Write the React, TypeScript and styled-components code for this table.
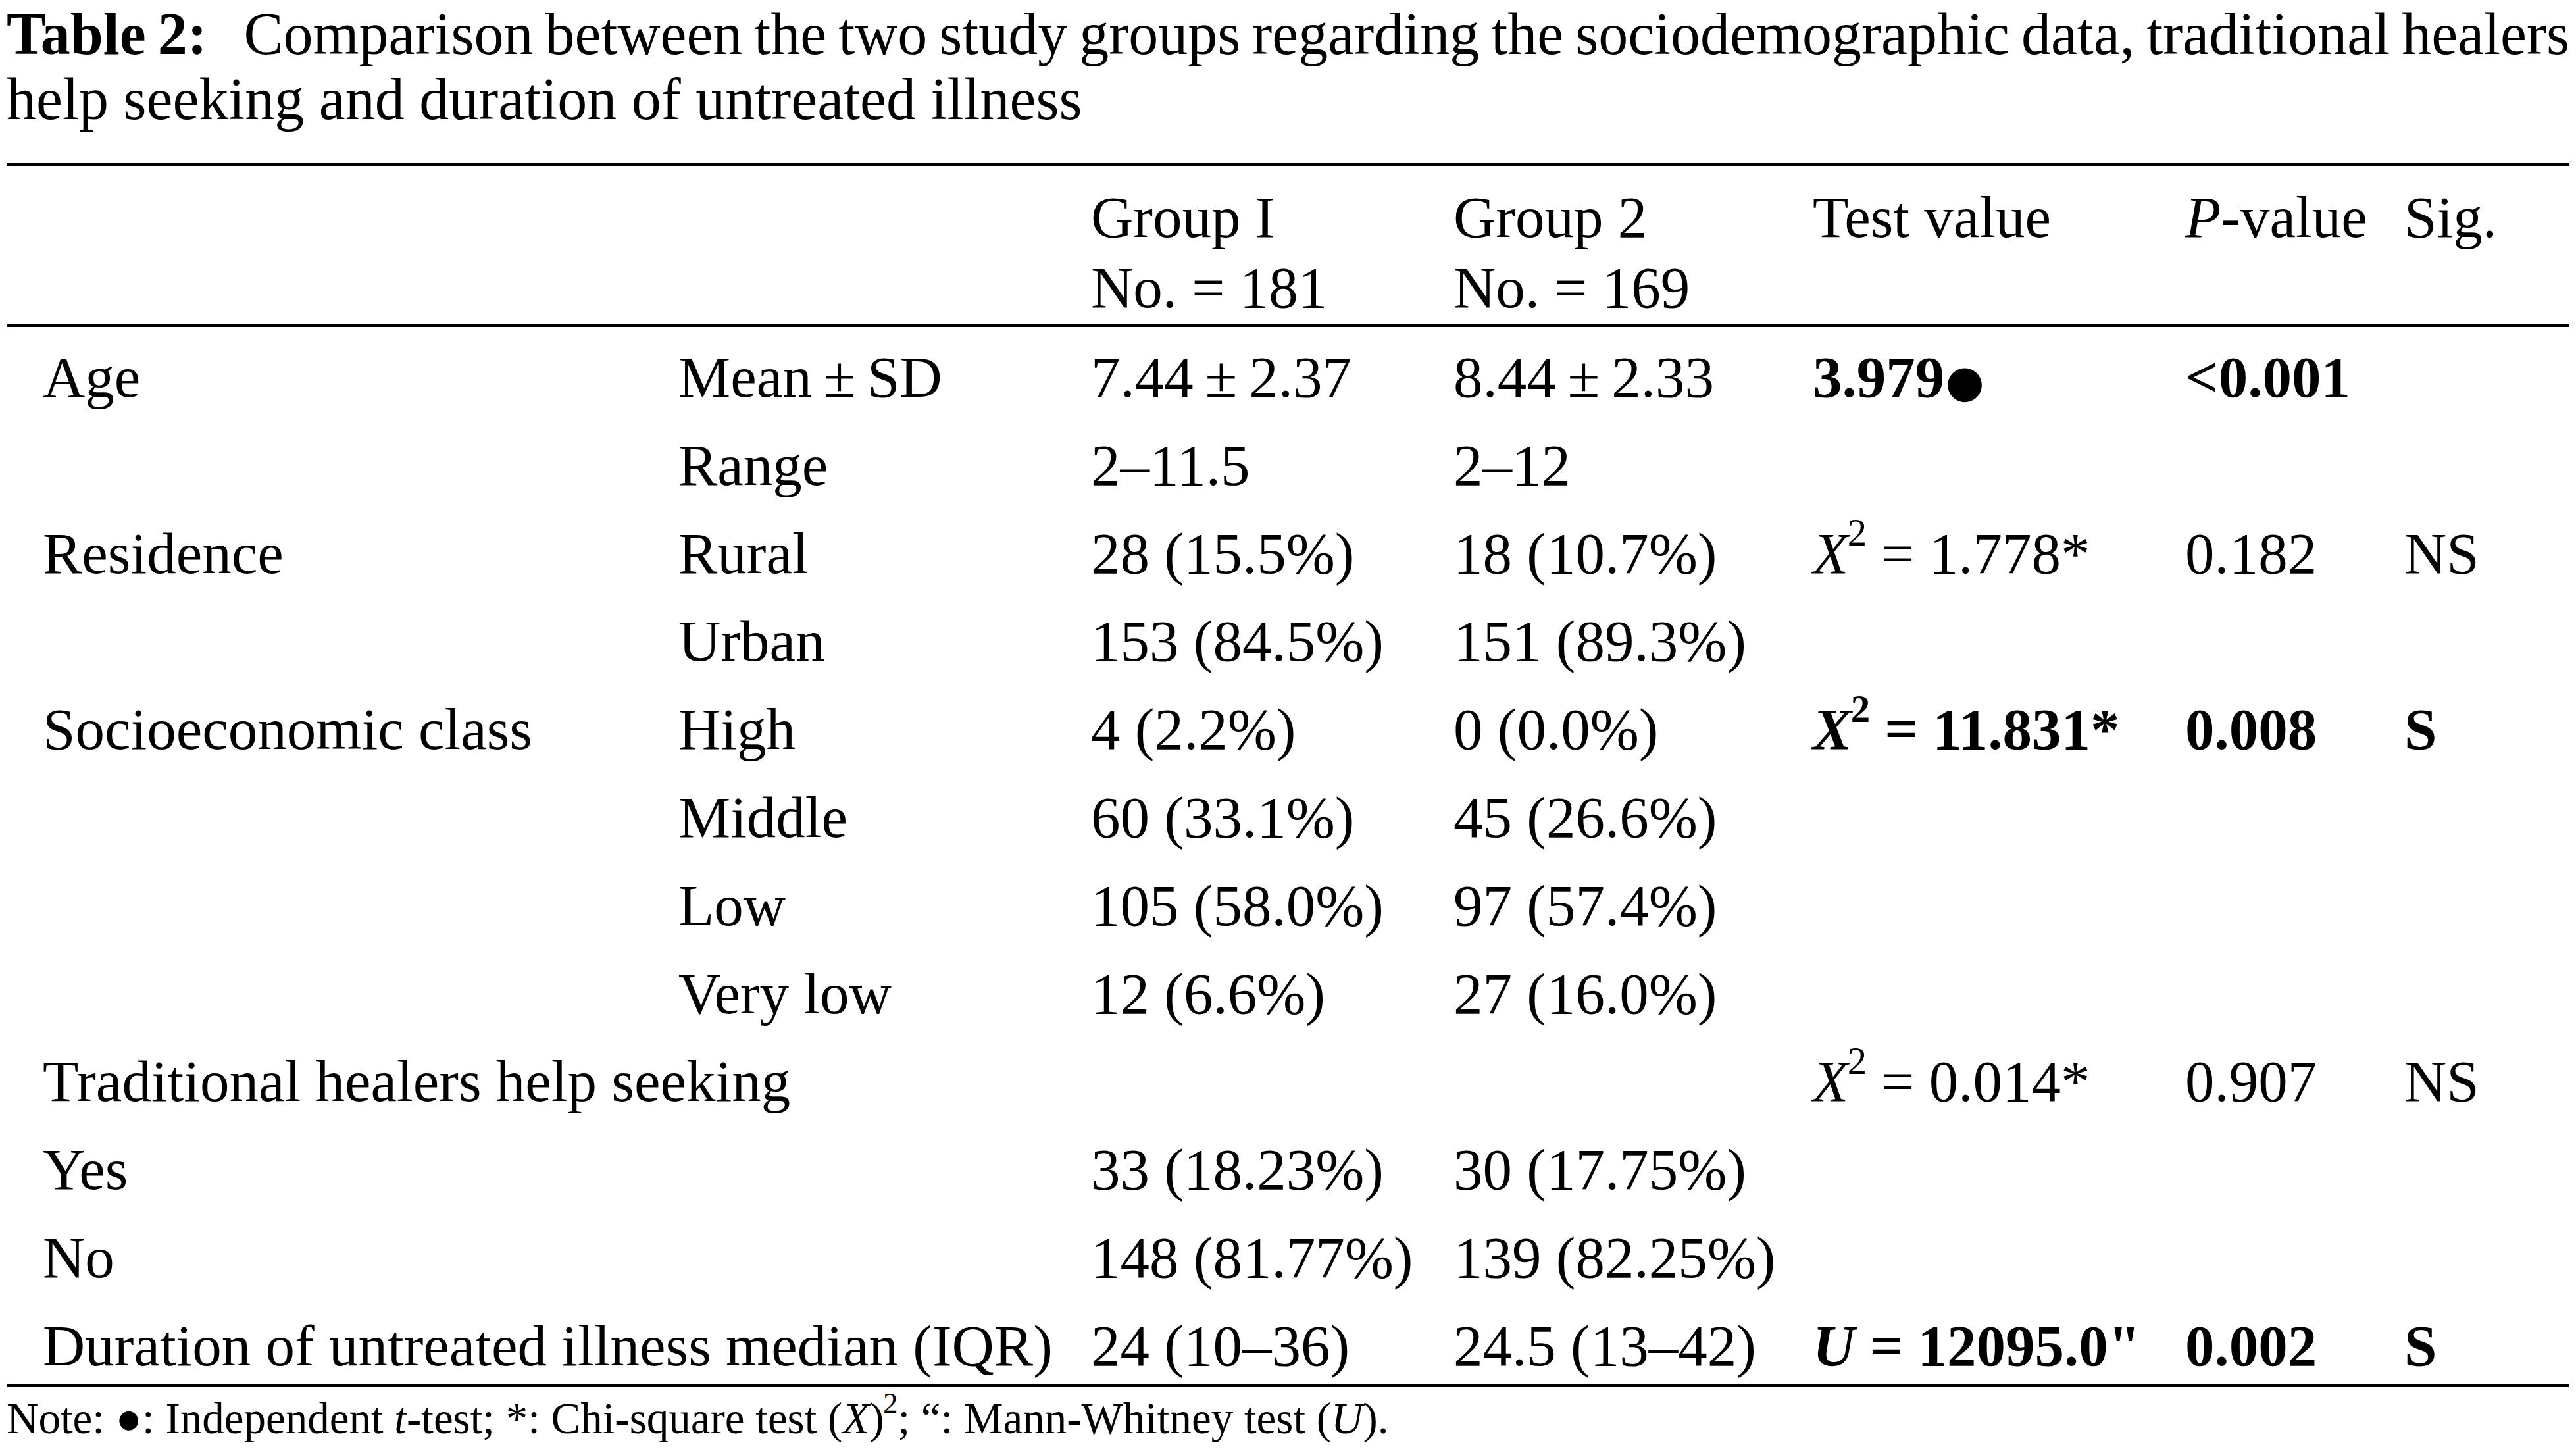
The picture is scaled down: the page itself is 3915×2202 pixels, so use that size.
import React from "react";
import styled, { createGlobalStyle } from "styled-components";

const GlobalStyle = createGlobalStyle`
  html, body {
    margin: 0;
    padding: 0;
    background: #ffffff;
  }
  body {
    font-family: "Liberation Serif", "Times New Roman", serif;
    color: #000000;
  }
`;

// column starts measured from the reference (first col text at x = 65)
const COLUMNS = "966px 627px 551px 546px 566px 333px 1fr";

const Page = styled.div`
  padding: 0 10px;
`;

const Caption = styled.p`
  margin: 2px 0 0;
  font-size: 90px;
  line-height: 99px;
`;

const CaptionLine = styled.span<{ $tight?: boolean }>`
  display: block;
  white-space: nowrap;
  word-spacing: ${(p) => (p.$tight ? "-4.5px" : "0")};
`;

const CaptionLabel = styled.b`
  font-weight: 700;
  margin-right: 0.42em;
`;

const Table = styled.div`
  margin-top: 47px;
  font-size: 89px;
`;

const Head = styled.div`
  display: grid;
  grid-template-columns: ${COLUMNS};
  padding: 24.5px 0 1.5px 55px;
  border-top: 5px solid #000;
  border-bottom: 5px solid #000;
  line-height: 107px;
`;

const HeadCell = styled.div<{ $col: number }>`
  grid-column: ${(p) => p.$col};
  white-space: nowrap;
`;

const Body = styled.div`
  display: flex;
  flex-direction: column;
  gap: 17.8px;
  padding: 18px 0 0 55px;
  border-bottom: 5px solid #000;
`;

const Row = styled.div`
  display: grid;
  grid-template-columns: ${COLUMNS};
  height: 116px;
  line-height: 116px;
`;

const Cell = styled.div<{ $span?: number; $bold?: boolean }>`
  grid-column: span ${(p) => p.$span ?? 1};
  white-space: nowrap;
  font-weight: ${(p) => (p.$bold ? 700 : 400)};
`;

const Sup = styled.sup`
  font-size: 0.66em;
  line-height: 0;
  vertical-align: 0.7em;
  margin-left: -0.03em;
`;

const Dot = styled.span`
  font-family: "DejaVu Sans", sans-serif;
  font-size: 0.76em;
  margin-left: 0.02em;
`;

const Note = styled.p`
  margin: 7.6px 0 0;
  font-size: 67px;
  line-height: 80px;
  white-space: nowrap;
`;

const Chi = ({ value }: { value: string }) => (
  <>
    <i>X</i>
    <Sup>2</Sup> = {value}*
  </>
);

type RowData = {
  label?: string;
  wide?: string;
  sub?: string;
  g1?: string;
  g2?: string;
  test?: React.ReactNode;
  p?: string;
  sig?: string;
  bold?: boolean;
};

const rows: RowData[] = [
  {
    label: "Age",
    sub: "Mean\u2009±\u2009SD",
    g1: "7.44\u2009±\u20092.37",
    g2: "8.44\u2009±\u20092.33",
    test: (
      <>
        3.979<Dot>●</Dot>
      </>
    ),
    p: "<0.001",
    bold: true,
  },
  { sub: "Range", g1: "2–11.5", g2: "2–12" },
  {
    label: "Residence",
    sub: "Rural",
    g1: "28 (15.5%)",
    g2: "18 (10.7%)",
    test: <Chi value="1.778" />,
    p: "0.182",
    sig: "NS",
  },
  { sub: "Urban", g1: "153 (84.5%)", g2: "151 (89.3%)" },
  {
    label: "Socioeconomic class",
    sub: "High",
    g1: "4 (2.2%)",
    g2: "0 (0.0%)",
    test: <Chi value="11.831" />,
    p: "0.008",
    sig: "S",
    bold: true,
  },
  { sub: "Middle", g1: "60 (33.1%)", g2: "45 (26.6%)" },
  { sub: "Low", g1: "105 (58.0%)", g2: "97 (57.4%)" },
  { sub: "Very low", g1: "12 (6.6%)", g2: "27 (16.0%)" },
  {
    wide: "Traditional healers help seeking",
    test: <Chi value="0.014" />,
    p: "0.907",
    sig: "NS",
  },
  { wide: "Yes", g1: "33 (18.23%)", g2: "30 (17.75%)" },
  { wide: "No", g1: "148 (81.77%)", g2: "139 (82.25%)" },
  {
    wide: "Duration of untreated illness median (IQR)",
    g1: "24 (10–36)",
    g2: "24.5 (13–42)",
    test: (
      <>
        <i>U</i> = 12095.0"
      </>
    ),
    p: "0.002",
    sig: "S",
    bold: true,
  },
];

const App = () => {
  return (
    <Page>
      <GlobalStyle />
      <Caption>
        <CaptionLine $tight>
          <CaptionLabel>Table 2:</CaptionLabel> Comparison between the two study groups regarding
          the sociodemographic data, traditional healers
        </CaptionLine>
        <CaptionLine>help seeking and duration of untreated illness</CaptionLine>
      </Caption>

      <Table>
        <Head>
          <HeadCell $col={3}>
            Group I<br />
            No. = 181
          </HeadCell>
          <HeadCell $col={4}>
            Group 2<br />
            No. = 169
          </HeadCell>
          <HeadCell $col={5}>Test value</HeadCell>
          <HeadCell $col={6}>
            <i>P</i>-value
          </HeadCell>
          <HeadCell $col={7}>Sig.</HeadCell>
        </Head>

        <Body>
          {rows.map((r, i) => (
            <Row key={i}>
              {r.wide ? (
                <Cell $span={2}>{r.wide}</Cell>
              ) : (
                <>
                  <Cell>{r.label}</Cell>
                  <Cell>{r.sub}</Cell>
                </>
              )}
              <Cell>{r.g1}</Cell>
              <Cell>{r.g2}</Cell>
              <Cell $bold={r.bold}>{r.test}</Cell>
              <Cell $bold={r.bold}>{r.p}</Cell>
              <Cell $bold={r.bold}>{r.sig}</Cell>
            </Row>
          ))}
        </Body>
      </Table>

      <Note>
        Note: ●: Independent <i>t</i>-test; *: Chi-square test (<i>X</i>)<Sup>2</Sup>; “: Mann-Whitney
        test (<i>U</i>).
      </Note>
    </Page>
  );
};

export default App;
